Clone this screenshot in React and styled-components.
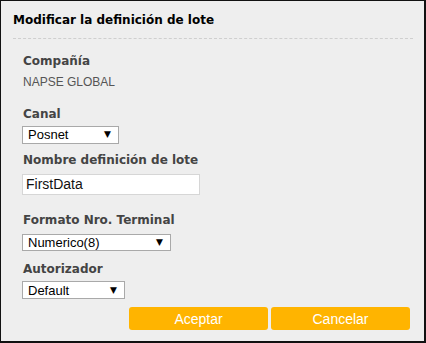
import React from "react";
import styled, { createGlobalStyle } from "styled-components";

const GlobalStyle = createGlobalStyle`
  body {
    margin: 0;
    background: #fff;
  }
`;

const Dialog = styled.div`
  box-sizing: border-box;
  width: 426px;
  height: 343px;
  background: #eeeeee;
  border: 1px solid #111;
  border-right-width: 2px;
  border-bottom-width: 2px;
  display: flex;
  flex-direction: column;
`;

const Header = styled.h3`
  margin: 0;
  padding: 11px 12px 0;
  font-family: "DejaVu Sans", Verdana, sans-serif;
  font-weight: bold;
  font-size: 12px;
  line-height: 16px;
  color: #000;
`;

const Divider = styled.hr`
  margin: 10px 11px 0 12px;
  border: 0;
  border-top: 1px dashed #cfcfcf;
  height: 0;
`;

const Body = styled.div`
  padding: 0 14px 0 21px;
  display: flex;
  flex-direction: column;
`;

const Field = styled.div`
  display: flex;
  flex-direction: column;
  align-items: flex-start;
  margin-top: ${(p) => p.$top}px;
  gap: ${(p) => p.$gap}px;
`;

const Label = styled.label`
  padding-left: 1px;
  font-family: "DejaVu Sans", Verdana, sans-serif;
  font-weight: bold;
  font-size: 12px;
  line-height: 16px;
  color: #444;
`;

const Value = styled.div`
  padding-left: 1px;
  font-family: "Liberation Sans", Arial, sans-serif;
  font-size: 12px;
  line-height: 16px;
  color: #555;
`;

const SelectWrap = styled.div`
  position: relative;
  width: ${(p) => p.$w}px;
  &::after {
    content: "▼";
    position: absolute;
    right: 8px;
    top: 50%;
    transform: translateY(-50%);
    font-size: 9px;
    color: #000;
    pointer-events: none;
    font-family: "DejaVu Sans", sans-serif;
  }
`;

const Select = styled.select`
  appearance: none;
  box-sizing: border-box;
  width: 100%;
  height: ${(p) => p.$h}px;
  margin: 0;
  padding: 0 18px 0 5px;
  background: #fff;
  border: 1px solid #a9a9a9;
  border-radius: 0;
  font-family: "Liberation Sans", Arial, sans-serif;
  font-size: 13px;
  color: #000;
  outline: none;
`;

const TextInput = styled.input`
  box-sizing: border-box;
  width: 178px;
  height: 21px;
  margin: 0;
  padding: 0 3px;
  background: #fff;
  border: 1px solid #d6d6d6;
  font-family: "Liberation Sans", Arial, sans-serif;
  font-size: 14px;
  color: #111;
  outline: none;
`;

const Actions = styled.div`
  display: flex;
  justify-content: flex-end;
  gap: 3px;
  margin-top: 8px;
`;

const Button = styled.button`
  width: 139px;
  height: 23px;
  border: 0;
  border-radius: 3px;
  background: #ffb400;
  color: #fff;
  font-family: "Liberation Sans", Arial, sans-serif;
  font-size: 14px;
  cursor: pointer;
`;

const Dropdown = ({ w, h, value, options }) => (
  <SelectWrap $w={w}>
    <Select $h={h} defaultValue={value}>
      {options.map((o) => (
        <option key={o}>{o}</option>
      ))}
    </Select>
  </SelectWrap>
);

export default function App() {
  return (
    <>
      <GlobalStyle />
      <Dialog>
        <Header>Modificar la definición de lote</Header>
        <Divider />
        <Body>
          <Field $top={14} $gap={5}>
            <Label>Compañía</Label>
            <Value>NAPSE GLOBAL</Value>
          </Field>
          <Field $top={16} $gap={3}>
            <Label>Canal</Label>
            <Dropdown w={97} h={18} value="Posnet" options={["Posnet"]} />
          </Field>
          <Field $top={8} $gap={6}>
            <Label>Nombre definición de lote</Label>
            <TextInput defaultValue="FirstData" />
          </Field>
          <Field $top={17} $gap={5}>
            <Label>Formato Nro. Terminal</Label>
            <Dropdown w={149} h={17} value="Numerico(8)" options={["Numerico(8)"]} />
          </Field>
          <Field $top={10} $gap={4}>
            <Label>Autorizador</Label>
            <Dropdown w={103} h={18} value="Default" options={["Default"]} />
          </Field>
          <Actions>
            <Button>Aceptar</Button>
            <Button>Cancelar</Button>
          </Actions>
        </Body>
      </Dialog>
    </>
  );
}
